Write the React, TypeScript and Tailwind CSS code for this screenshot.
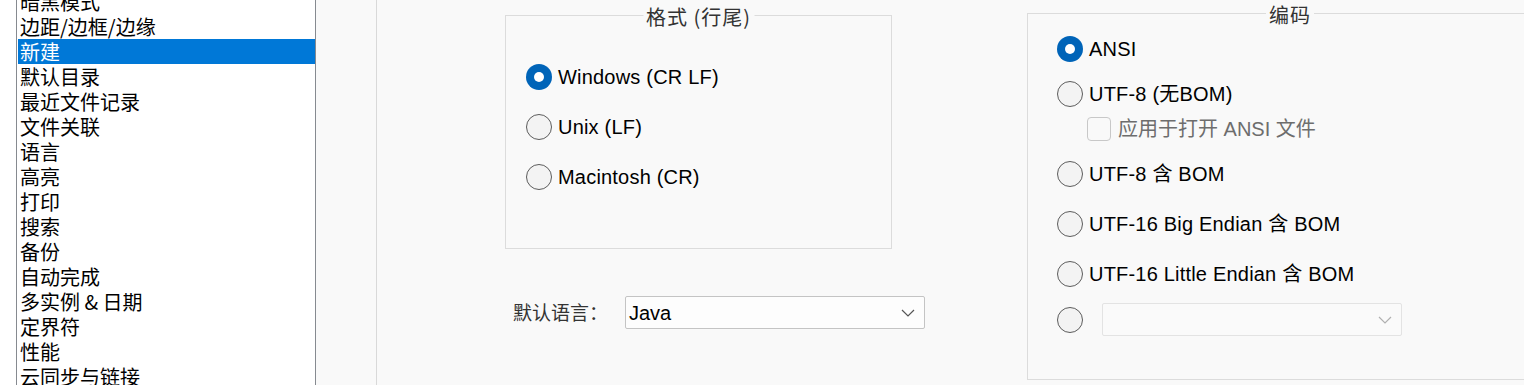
const menu = [
  '暗黑模式',
  '边距/边框/边缘',
  '新建',
  '默认目录',
  '最近文件记录',
  '文件关联',
  '语言',
  '高亮',
  '打印',
  '搜索',
  '备份',
  '自动完成',
  '多实例 & 日期',
  '定界符',
  '性能',
  '云同步与链接',
]

const cjk = "font-['Noto_Sans_CJK_SC',sans-serif]"
const latin = "font-['Liberation_Sans','Noto_Sans_CJK_SC',sans-serif]"

function Radio({ checked }: { checked?: boolean }) {
  if (checked) {
    return (
      <span className="flex h-[26px] w-[26px] shrink-0 items-center justify-center rounded-full bg-[#0064b8]">
        <span className="h-[10px] w-[10px] rounded-full bg-white" />
      </span>
    )
  }
  return <span className="h-[26px] w-[26px] shrink-0 rounded-full border-[1.5px] border-[#5c5c5c] bg-[#f3f3f3]" />
}

function Chevron({ color }: { color: string }) {
  return (
    <svg width="14" height="8" viewBox="0 0 14 8" fill="none">
      <path d="M1 1 L7 7 L13 1" stroke={color} strokeWidth="1.2" />
    </svg>
  )
}

function Option({ label, checked, gap }: { label: string; checked?: boolean; gap: string }) {
  return (
    <div className={`flex h-[26px] items-center ${gap}`}>
      <Radio checked={checked} />
      <span className={`ml-[6px] whitespace-nowrap text-[20px] leading-none tracking-[0.2px] text-black ${latin}`}>
        {label}
      </span>
    </div>
  )
}

function GroupBox({
  title,
  className,
  children,
}: {
  title: string
  className: string
  children: React.ReactNode
}) {
  return (
    <div className={`relative shrink-0 border border-[#dcdcdc] ${className}`}>
      <span
        className={`absolute left-1/2 top-0 -translate-x-1/2 -translate-y-[45%] whitespace-nowrap bg-[#f9f9f9] px-[3px] text-[20px] leading-none tracking-[1px] text-[#333] ${cjk}`}
      >
        {title}
      </span>
      {children}
    </div>
  )
}

export default function App() {
  return (
    <div className="flex h-[385px] w-[1524px] overflow-hidden bg-[#f9f9f9]">
      <div className="w-4 shrink-0 bg-white" />

      <div className="w-[300px] shrink-0 overflow-hidden border-x border-[#868a90] bg-white pl-px">
        <div className="-mt-[11px]">
          {menu.map((item) => (
            <div
              key={item}
              className={`h-[25px] whitespace-nowrap pl-[2px] text-[20px] leading-[25px] ${cjk} ${
                item === '新建' ? 'bg-[#0078d7] text-white' : 'text-black'
              }`}
            >
              {item}
            </div>
          ))}
        </div>
      </div>

      <div className="w-[60px] shrink-0" />
      <div className="w-px shrink-0 bg-[#d9d9d9]" />

      <div className="flex flex-1">
        <div className="ml-[128px] flex w-[387px] shrink-0 flex-col pt-[15px]">
          <GroupBox title="格式 (行尾)" className="h-[234px] w-[387px] pl-5 pt-[48px]">
            <Option label="Windows (CR LF)" checked gap="" />
            <Option label="Unix (LF)" gap="mt-6" />
            <Option label="Macintosh (CR)" gap="mt-6" />
          </GroupBox>

          <div className="mt-[47px] flex h-[33px] w-max items-center pl-2">
            <span className={`w-[112px] shrink-0 text-[19px] text-[#333] ${cjk}`}>默认语言：</span>
            <div className="flex h-[33px] w-[300px] shrink-0 items-center justify-between rounded-[2px] border border-[#c4c4c4] bg-[#fdfdfd] pl-[3px] pr-[9px]">
              <span className={`text-[20px] text-black ${latin}`}>Java</span>
              <Chevron color="#555" />
            </div>
          </div>
        </div>

        <div className="ml-[135px] shrink-0 pt-[13px]">
          <GroupBox title="编码" className="h-[367px] w-[526px] pl-[29px] pt-[22px]">
            <Option label="ANSI" checked gap="" />
            <Option label="UTF-8 (无BOM)" gap="mt-[19px]" />
            <div className="ml-[30px] mt-[10px] flex h-[24px] items-center">
              <span className="h-[24px] w-[24px] rounded-[4px] border border-[#c8c8c8] bg-[#f9f9f9]" />
              <span className={`ml-[7px] whitespace-nowrap text-[20px] leading-none text-[#6d6d6d] ${latin}`}>
                应用于打开 ANSI 文件
              </span>
            </div>
            <Option label="UTF-8 含 BOM" gap="mt-5" />
            <Option label="UTF-16 Big Endian 含 BOM" gap="mt-6" />
            <Option label="UTF-16 Little Endian 含 BOM" gap="mt-6" />
            <div className="mt-4 flex h-[33px] items-center">
              <Radio />
              <div className="ml-[19px] flex h-[33px] w-[300px] items-center justify-end rounded-[2px] border border-[#e3e3e3] bg-[#fafafa] pr-[9px]">
                <Chevron color="#b0b0b0" />
              </div>
            </div>
          </GroupBox>
        </div>
      </div>
    </div>
  )
}
